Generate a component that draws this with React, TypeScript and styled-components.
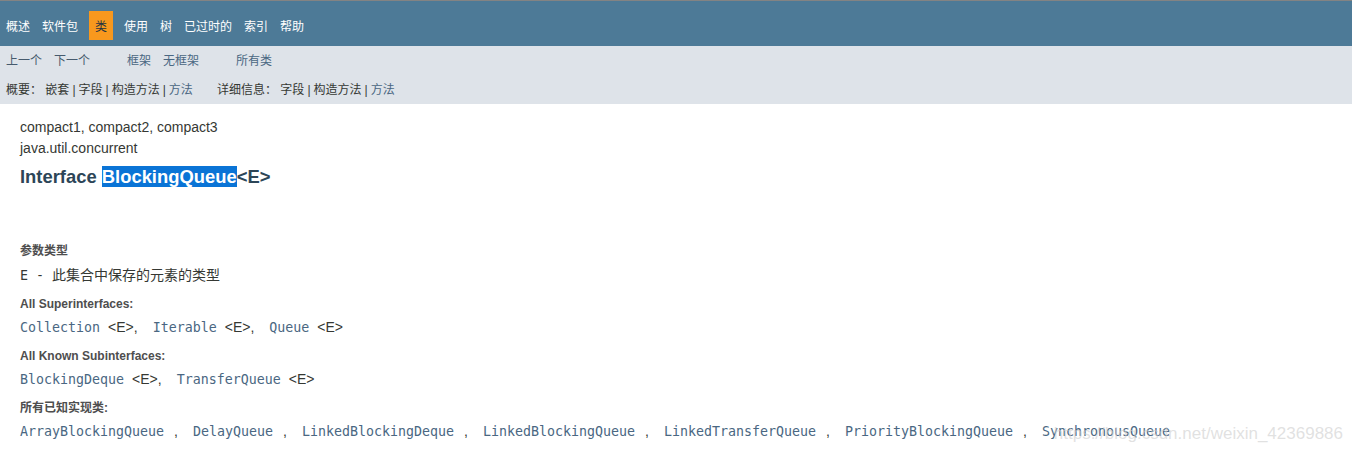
import React from 'react';
import styled, { createGlobalStyle } from 'styled-components';

const GlobalStyle = createGlobalStyle`
  html, body {
    margin: 0;
    padding: 0;
    background: #ffffff;
  }
  body {
    font-family: "Liberation Sans", Arial, "Noto Sans CJK SC", sans-serif;
    color: #353833;
  }
`;

const cjk = `"Liberation Sans", Arial, "Noto Sans CJK SC", sans-serif`;
const mono = `"DejaVu Sans Mono", "Liberation Mono", "Noto Sans CJK SC", monospace`;

const Page = styled.div`
  position: relative;
  width: 1352px;
  height: 454px;
  overflow: hidden;
  border-top: 1px solid #838383;
  box-sizing: border-box;
`;

const TopNav = styled.ul`
  display: flex;
  align-items: center;
  height: 45px;
  box-sizing: border-box;
  margin: 0;
  padding: 4px 0 0 0;
  background: #4d7a97;
  list-style: none;
  font-family: ${cjk};
  font-size: 12px;
`;

const NavItem = styled.li<{ $active?: boolean }>`
  display: flex;
  align-items: center;
  height: 29px;
  margin: 0 ${p => (p.$active ? '5px' : '0')};
  padding: 0 6px;
  color: ${p => (p.$active ? '#253441' : '#ffffff')};
  background: ${p => (p.$active ? '#f8981d' : 'transparent')};
`;

const SubNav = styled.div`
  background: #dee3e9;
  height: 58px;
  font-family: ${cjk};
  font-size: 12px;
  display: flex;
  flex-direction: column;
`;

const SubRow = styled.div<{ $height: number }>`
  display: flex;
  align-items: center;
  height: ${p => p.$height}px;
  padding-left: 6px;
`;

const SubGroup = styled.div<{ $width?: number }>`
  display: flex;
  gap: 12px;
  width: ${p => (p.$width ? `${p.$width}px` : 'auto')};
  flex-shrink: 0;
`;

const SubLink = styled.span<{ $muted?: boolean }>`
  color: ${p => (p.$muted ? '#465a6d' : '#4a6782')};
`;

const Plain = styled.span`
  color: #353833;
`;

const Bar = styled.span`
  color: #353833;
  margin: 0 3px;
`;

const Content = styled.div`
  padding: 13px 20px 0;
`;

const Subtitle = styled.div`
  font-size: 14px;
  line-height: 21px;
  color: #353833;
`;

const Title = styled.h2`
  margin: 8px 0 0;
  font-size: 18.4px;
  line-height: 20px;
  font-weight: bold;
  color: #2c4557;
`;

const Selected = styled.span`
  background: #0a74d6;
  color: #ffffff;
`;

const DefList = styled.dl`
  margin: 56px 0 0;
`;

const Term = styled.dt`
  font-family: ${cjk};
  font-size: 12px;
  line-height: 16px;
  font-weight: bold;
  color: #4e4e4e;
  margin-bottom: 5px;
`;

const Def = styled.dd`
  margin: 0 0 10px;
  font-family: ${mono};
  font-size: 13.3px;
  line-height: 20px;
  white-space: pre;
  color: #353833;
`;

const CodeLink = styled.span`
  color: #4a6782;
`;

const Generic = styled.span`
  font-family: "Liberation Sans", Arial, sans-serif;
  font-size: 14px;
  color: #353833;
  margin-left: 8px;
`;

const Comma = styled.span`
  font-family: "Liberation Sans", Arial, sans-serif;
  font-size: 14px;
  margin-right: 15px;
`;

const ListSep = styled.span`
  font-family: "Liberation Sans", Arial, sans-serif;
  font-size: 14px;
  color: #353833;
  margin: 0 15px 0 10px;
`;

const Desc = styled.span`
  font-family: "Noto Sans CJK SC", sans-serif;
  font-size: 14px;
`;

const Watermark = styled.div`
  position: absolute;
  right: 9px;
  bottom: 10px;
  font-family: "Liberation Sans", Arial, sans-serif;
  font-size: 17px;
  color: rgba(205, 205, 205, 0.6);
  pointer-events: none;
`;

const navItems = ['概述', '软件包', '类', '使用', '树', '已过时的', '索引', '帮助'];

const implementing = [
  'ArrayBlockingQueue',
  'DelayQueue',
  'LinkedBlockingDeque',
  'LinkedBlockingQueue',
  'LinkedTransferQueue',
  'PriorityBlockingQueue',
  'SynchronousQueue',
];

const GenericList: React.FC<{ names: string[] }> = ({ names }) => (
  <>
    {names.map((n, i) => (
      <React.Fragment key={n}>
        <CodeLink>{n}</CodeLink>
        <Generic>&lt;E&gt;</Generic>
        {i < names.length - 1 && <Comma>,</Comma>}
      </React.Fragment>
    ))}
  </>
);

export default function App() {
  return (
    <>
      <GlobalStyle />
      <Page>
        <TopNav>
          {navItems.map(item => (
            <NavItem key={item} $active={item === '类'}>
              {item}
            </NavItem>
          ))}
        </TopNav>
        <SubNav>
          <SubRow $height={26}>
            <SubGroup $width={121}>
              <SubLink $muted>上一个</SubLink>
              <SubLink $muted>下一个</SubLink>
            </SubGroup>
            <SubGroup $width={109}>
              <SubLink>框架</SubLink>
              <SubLink>无框架</SubLink>
            </SubGroup>
            <SubGroup>
              <SubLink>所有类</SubLink>
            </SubGroup>
          </SubRow>
          <SubRow $height={32}>
            <SubGroup $width={211}>
              <span>
                <Plain>概要：</Plain> <Plain>嵌套</Plain>
                <Bar>|</Bar>
                <Plain>字段</Plain>
                <Bar>|</Bar>
                <Plain>构造方法</Plain>
                <Bar>|</Bar>
                <SubLink>方法</SubLink>
              </span>
            </SubGroup>
            <SubGroup>
              <span>
                <Plain>详细信息：</Plain> <Plain>字段</Plain>
                <Bar>|</Bar>
                <Plain>构造方法</Plain>
                <Bar>|</Bar>
                <SubLink>方法</SubLink>
              </span>
            </SubGroup>
          </SubRow>
        </SubNav>
        <Content>
          <Subtitle>compact1, compact2, compact3</Subtitle>
          <Subtitle>java.util.concurrent</Subtitle>
          <Title>
            Interface <Selected>BlockingQueue</Selected>&lt;E&gt;
          </Title>
          <DefList>
            <Term>参数类型</Term>
            <Def>
              E - <Desc>此集合中保存的元素的类型</Desc>
            </Def>
            <Term>All Superinterfaces:</Term>
            <Def>
              <GenericList names={['Collection', 'Iterable', 'Queue']} />
            </Def>
            <Term>All Known Subinterfaces:</Term>
            <Def>
              <GenericList names={['BlockingDeque', 'TransferQueue']} />
            </Def>
            <Term>所有已知实现类:</Term>
            <Def>
              {implementing.map((n, i) => (
                <React.Fragment key={n}>
                  <CodeLink>{n}</CodeLink>
                  {i < implementing.length - 1 && <ListSep>,</ListSep>}
                </React.Fragment>
              ))}
            </Def>
          </DefList>
        </Content>
        <Watermark>https://blog.csdn.net/weixin_42369886</Watermark>
      </Page>
    </>
  );
}
